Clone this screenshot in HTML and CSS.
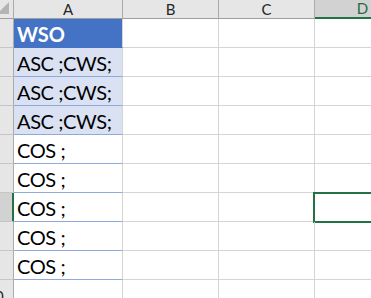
FILE: index.html
```html
<!DOCTYPE html>
<html>
<head>
<meta charset="utf-8">
<link rel="stylesheet" href="styles.css">
</head>
<body>
<div class="sheet">
  <div class="corner"><span class="tri"></span></div>
  <div class="colhead">A</div>
  <div class="colhead">B</div>
  <div class="colhead">C</div>
  <div class="colhead sel">D</div>

  <div class="rowhead">1</div>
  <div class="cell a th">WSO</div>
  <div class="cell"></div><div class="cell"></div><div class="cell"></div>

  <div class="rowhead">2</div>
  <div class="cell a band">ASC ;CWS;</div>
  <div class="cell"></div><div class="cell"></div><div class="cell"></div>

  <div class="rowhead">3</div>
  <div class="cell a band">ASC ;CWS;</div>
  <div class="cell"></div><div class="cell"></div><div class="cell"></div>

  <div class="rowhead">4</div>
  <div class="cell a band">ASC ;CWS;</div>
  <div class="cell"></div><div class="cell"></div><div class="cell"></div>

  <div class="rowhead">5</div>
  <div class="cell a td">COS ;</div>
  <div class="cell"></div><div class="cell"></div><div class="cell"></div>

  <div class="rowhead">6</div>
  <div class="cell a td">COS ;</div>
  <div class="cell"></div><div class="cell"></div><div class="cell"></div>

  <div class="rowhead sel">7</div>
  <div class="cell a td">COS ;</div>
  <div class="cell"></div><div class="cell"></div><div class="cell active"></div>

  <div class="rowhead">8</div>
  <div class="cell a td">COS ;</div>
  <div class="cell"></div><div class="cell"></div><div class="cell"></div>

  <div class="rowhead">9</div>
  <div class="cell a td">COS ;</div>
  <div class="cell"></div><div class="cell"></div><div class="cell"></div>

  <div class="rowhead">10</div>
  <div class="cell"></div>
  <div class="cell"></div><div class="cell"></div><div class="cell"></div>
</div>
</body>
</html>
```

FILE: styles.css
```css
html, body {
  margin: 0;
  padding: 0;
  background: #ffffff;
  overflow: hidden;
}

.sheet {
  display: grid;
  grid-template-columns: 37px 109px 96px 96px 96px;
  grid-template-rows: 19px repeat(10, 29px);
  margin-left: -23px;
  width: 434px;
  font-family: Lato, "Open Sans", sans-serif;
}

.corner {
  position: relative;
  background: #e6e6e6;
  border-right: 1px solid #ababab;
  border-bottom: 1px solid #9e9e9e;
}

.tri {
  position: absolute;
  right: 4px;
  bottom: 4px;
  width: 0;
  height: 0;
  border-left: 12px solid transparent;
  border-bottom: 12px solid #b4b4b4;
}

.colhead {
  background: #e6e6e6;
  border-right: 1px solid #ababab;
  border-bottom: 1px solid #9e9e9e;
  font-size: 15px;
  line-height: 18px;
  text-align: center;
  color: #262626;
}

.colhead.sel {
  background: #d2d2d2;
  color: #1e6b41;
  border-bottom: 2px solid #217346;
  line-height: 17px;
}

.rowhead {
  background: #e6e6e6;
  border-right: 1px solid #ababab;
  border-bottom: 1px solid #c6c6c6;
  font-size: 15px;
  color: #262626;
  display: flex;
  align-items: flex-end;
  justify-content: center;
  padding-bottom: 4px;
  line-height: 1;
}

.rowhead.sel {
  background: #d2d2d2;
  border-right-color: #217346;
  box-shadow: inset -1px 0 0 #217346;
}

.cell {
  border-right: 1px solid #d4d4d4;
  border-bottom: 1px solid #d4d4d4;
  font-size: 20px;
  letter-spacing: -0.4px;
  color: #000000;
  display: flex;
  align-items: flex-end;
  padding-left: 3px;
  padding-bottom: 3px;
  line-height: 1;
  white-space: nowrap;
  position: relative;
}

.cell.th {
  background: #4472c4;
  color: #ffffff;
  font-weight: bold;
  letter-spacing: 0;
  border-bottom-color: #4472c4;
}

.cell.band {
  background: #d9e1f2;
  border-bottom-color: #8ea9db;
}

.cell.td {
  border-bottom-color: #8ea9db;
}

.cell.active::after {
  content: "";
  position: absolute;
  left: -2px;
  top: -1px;
  right: -2px;
  bottom: -2px;
  border: 2px solid #217346;
}
```
